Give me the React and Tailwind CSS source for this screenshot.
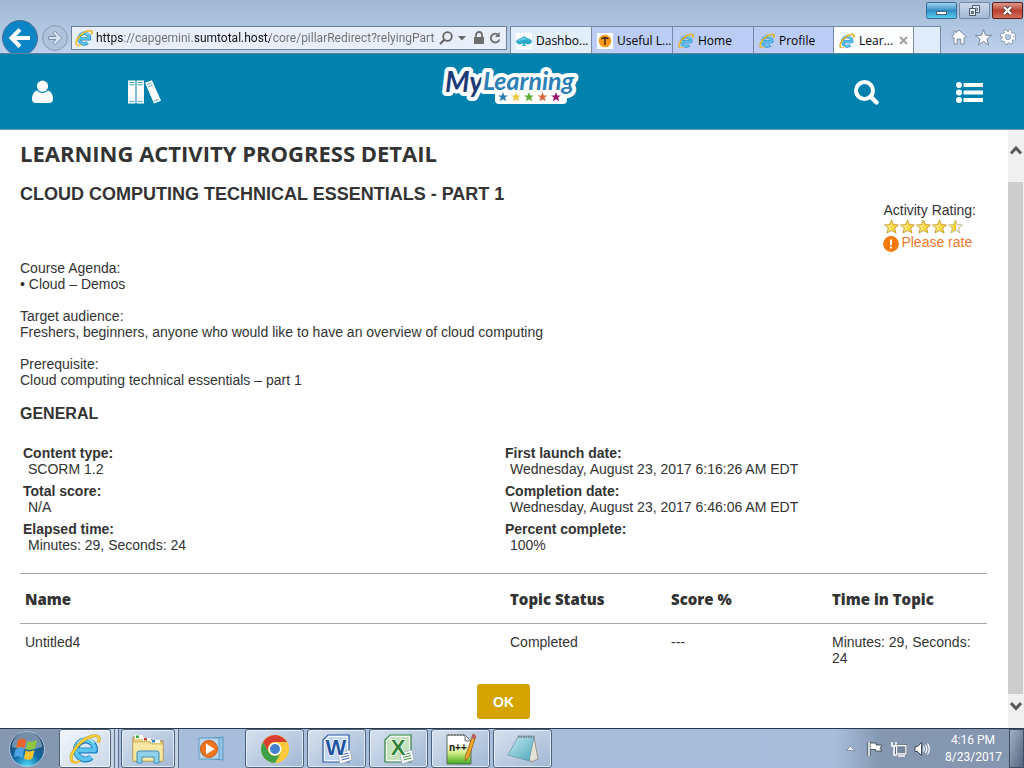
import React from "react";

const UI = "font-['Open_Sans','Noto_Sans',sans-serif]";

function IEIcon({ className }) {
  return (
    <svg viewBox="0 0 32 32" className={className} aria-hidden="true">
      <path d="M22.500 24.400A9.500 9.500 0 1 1 26 17.500H9" fill="none" stroke="#1f7fc0" strokeWidth="6" strokeLinejoin="round" />
      <path d="M22.200 24.100A9.500 9.500 0 1 1 25.700 17.300H9" fill="none" stroke="#5cc4f0" strokeWidth="4" strokeLinejoin="round" />
      <path d="M9 10C13 5 21 4 25 10" fill="none" stroke="#b8e9fb" strokeWidth="1.600" />
      <path d="M4 29C-2 24 9 8 22 3.500C30 .8 31.500 5 29 9.500" fill="none" stroke="#c8951a" strokeWidth="3" />
      <path d="M4 29C-2 24 9 8 22 3.500C30 .8 31.500 5 29 9.500" fill="none" stroke="#fbd13b" strokeWidth="2" />
      <path d="M3.500 28.500C6 31 9 29 11 27.500" fill="none" stroke="#efba28" strokeWidth="2" />
    </svg>
  );
}

function SpadeIcon() {
  return (
    <svg viewBox="0 0 16 16" className="size-4 shrink-0" aria-hidden="true">
      <rect width="16" height="16" fill="#fff" />
      <path d="M0 8.500C1 5.500 4 6.500 6 4.500C8 2.500 11 4 11.500 5.500C14 5.500 16 7 16 8.500C15.500 11.500 11 12 8.500 10.500C9 12 10 12.500 11 13H5C7 12.500 7.500 11.500 7 10.500C4 12 1 11.500 0 8.500Z" fill="#2aa9cc" />
      <path d="M1 8C3 6 5 7 7 5C9 3.500 11 5 11 6.500C8 6 5 7.500 1 8Z" fill="#6fd0e4" />
    </svg>
  );
}

function OrangeIcon() {
  return (
    <svg viewBox="0 0 16 16" className="size-4 shrink-0" aria-hidden="true">
      <rect width="16" height="16" fill="#fff" />
      <circle cx="8" cy="8" r="6.300" fill="#f79a1c" />
      <path d="M4.500 5.800Q8 3.600 11.500 5.800M8 5.500V12" fill="none" stroke="#3b2410" strokeWidth="1.400" />
    </svg>
  );
}

const tabs = [
  { label: "Dashbo...", icon: <SpadeIcon />, look: "w-[81px] bg-[#e3eefb]" },
  { label: "Useful L...", icon: <OrangeIcon />, look: "w-[81px] bg-[#bccdf5]" },
  { label: "Home", icon: <IEIcon className="size-4 shrink-0" />, look: "w-[81px] bg-[#bccdf5]" },
  { label: "Profile", icon: <IEIcon className="size-4 shrink-0" />, look: "w-[80px] bg-[#bccdf5]" },
  { label: "Lear...", icon: <IEIcon className="size-4 shrink-0" />, look: "w-[80px] bg-[#fbfdff]", active: true },
];

function WindowButtons() {
  return (
    <div className="flex h-5 items-center justify-end gap-[2px] pr-[1px]">
      <button aria-label="Minimize" className="h-[17px] w-[31px] rounded-[2px] border border-[#3b6d94] bg-linear-to-b from-[#9fd3ee] via-[#2f8fc6] to-[#58cdef]">
        <svg viewBox="0 0 29 15" className="size-full" aria-hidden="true"><rect x="9.500" y="8.500" width="10" height="3" fill="#fff" stroke="#4d6070" /></svg>
      </button>
      <button aria-label="Restore" className="h-[17px] w-[31px] rounded-[2px] border border-[#7689a5] bg-linear-to-b from-[#c9d7ea] to-[#a4b9d5]">
        <svg viewBox="0 0 29 15" className="size-full" aria-hidden="true">
          <path d="M12.500 2.500H19.500V9.500H12.500Z" fill="#e9eff7" stroke="#47566b" />
          <path d="M15 5H17.500V7.500H15Z" fill="#a9bad3" stroke="#47566b" strokeWidth=".7" />
          <path d="M9.500 5.500H15.500V12.500H9.500Z" fill="#eef3f9" stroke="#47566b" />
          <path d="M11.500 8.500H13.500V10.500H11.500Z" fill="#a9bad3" stroke="#47566b" />
        </svg>
      </button>
      <button aria-label="Close" className="h-[17px] w-[31px] rounded-[2px] border border-[#5c1e1c] bg-linear-to-b from-[#dc9a8c] via-[#bb4032] to-[#d0705a]">
        <svg viewBox="0 0 29 15" className="size-full" aria-hidden="true">
          <path d="M11 4L18 11M18 4L11 11" stroke="#5a3a3c" strokeWidth="4" />
          <path d="M11 4L18 11M18 4L11 11" stroke="#fff" strokeWidth="2.400" />
        </svg>
      </button>
    </div>
  );
}

function BrowserBar() {
  return (
    <div className={`${UI} overflow-hidden border-b border-[#62819b] bg-linear-to-b from-[#a1b9d5] to-[#bdd1ec] text-[12px] text-black`}>
      <WindowButtons />
      <div className="flex h-[33px] items-start overflow-hidden">
        <button aria-label="Back" className="ml-[2px] size-9 shrink-0">
          <svg viewBox="0 0 36 36" className="size-full" aria-hidden="true">
            <circle cx="18" cy="18" r="17.500" fill="#0b85c6" stroke="#4e6d8d" />
            <path d="M28 18H10M18 9.500L9.500 18L18 26.500" fill="none" stroke="#fff" strokeWidth="4" />
          </svg>
        </button>
        <button aria-label="Forward" className="mt-[5px] ml-[4px] size-[26px] shrink-0">
          <svg viewBox="0 0 26 26" className="size-full" aria-hidden="true">
            <circle cx="13" cy="13" r="12.400" fill="#afc3dc" stroke="#8699b1" />
            <path d="M6.500 11.500H14L10.800 8.300L13 6.200L19.800 13L13 19.800L10.800 17.700L14 14.500H6.500Z" fill="#d9e4f2" stroke="#7d8fa8" />
          </svg>
        </button>
        <div className="mt-[6px] ml-[3px] flex h-6 min-w-0 flex-1 items-center border border-[#6c7f96] bg-[#e9effa] pr-[5px] pl-[3px]">
          <IEIcon className="size-[18px] shrink-0" />
          <input
            aria-label="Address"
            defaultValue="https://capgemini.sumtotal.host/core/pillarRedirect?relyingParty"
            className="ml-[3px] min-w-0 flex-1 bg-[linear-gradient(to_right,#111_28px,#6e6e6e_28px,#6e6e6e_99px,#111_99px,#111_174px,#6e6e6e_174px)] bg-clip-text font-['Roboto',sans-serif] text-transparent outline-none"
          />
          <button aria-label="Search" className="ml-[5px] size-[14px] shrink-0">
            <svg viewBox="0 0 14 14" className="size-full" aria-hidden="true"><circle cx="8.500" cy="5.500" r="4.300" fill="none" stroke="#666" strokeWidth="1.800" /><path d="M5.500 8.500L1 13" stroke="#666" strokeWidth="2.200" /></svg>
          </button>
          <button aria-label="Show addresses" className="ml-[5px] w-2 shrink-0">
            <svg viewBox="0 0 8 5" className="w-full" aria-hidden="true"><path d="M0 0H8L4 4.500Z" fill="#666" /></svg>
          </button>
          <svg viewBox="0 0 12 14" className="ml-[7px] h-[14px] w-3 shrink-0" aria-hidden="true"><path d="M3 7V4A3 3 0 0 1 9 4V7" fill="none" stroke="#6e6e6e" strokeWidth="1.800" /><rect x="1" y="6" width="10" height="7" fill="#6e6e6e" /></svg>
          <button aria-label="Refresh" className="ml-[4px] size-3 shrink-0">
            <svg viewBox="0 0 12 12" className="size-full" aria-hidden="true"><path d="M8.500 2.300A4.400 4.400 0 1 0 10.400 7.500" fill="none" stroke="#6e6e6e" strokeWidth="1.900" /><path d="M6.300 5V4.500L10.700 0V5Z" fill="#6e6e6e" /></svg>
          </button>
        </div>
        <div className="mt-[6px] ml-[3px] flex h-[27px] shrink-0 border-t border-l border-[#7589a5]">
          {tabs.map((t) => (
            <div key={t.label} className={`flex items-center border-r border-[#7589a5] pt-[1px] pl-[5px] ${t.look}`}>
              <button className="flex items-center gap-[4px] whitespace-nowrap">
                {t.icon}
                {t.label}
              </button>
              {t.active && (
                <button aria-label="Close tab" className="ml-[6px] size-[9px]">
                  <svg viewBox="0 0 9 9" className="size-full" aria-hidden="true"><path d="M1 1L8 8M8 1L1 8" stroke="#a2a2a2" strokeWidth="2" /></svg>
                </button>
              )}
            </div>
          ))}
          <button aria-label="New tab" className="w-[27px] border-r border-[#7589a5] bg-[#e0ecf9]" />
        </div>
        <div className="mt-[9px] flex shrink-0 gap-2 pr-2 pl-[10px]">
          <button aria-label="Home" className="size-4">
            <svg viewBox="0 0 16 16" className="size-full" aria-hidden="true"><path d="M8 1L15.300 8L14 9.300L13 8.500V15H9.800V10H6.200V15H3V8.500L2 9.300L.7 8L3 5.800V2H5V4Z" fill="#fff" stroke="#74859c" strokeWidth=".9" /></svg>
          </button>
          <button aria-label="Favorites" className="size-[17px]">
            <svg viewBox="0 0 16 16" className="size-full" aria-hidden="true"><path d="M8 .5L10 6H15.700L11.200 9.400L12.800 15L8 11.700L3.200 15L4.800 9.400L.3 6H6Z" fill="#fff" stroke="#74859c" strokeWidth=".9" /></svg>
          </button>
          <button aria-label="Tools" className="size-4">
            <svg viewBox="0 0 16 16" className="size-full" aria-hidden="true">
              <circle cx="8" cy="8" r="6.300" fill="none" stroke="#74859c" strokeWidth="3.400" strokeDasharray="2.900 2.048" />
              <circle cx="8" cy="8" r="4.300" fill="none" stroke="#74859c" strokeWidth="4.200" />
              <circle cx="8" cy="8" r="6.100" fill="none" stroke="#fff" strokeWidth="2.400" strokeDasharray="2.300 2.491" strokeDashoffset="-.3" />
              <circle cx="8" cy="8" r="4.200" fill="none" stroke="#fff" strokeWidth="2.700" />
            </svg>
          </button>
        </div>
      </div>
    </div>
  );
}

const STAR = "M0-5L1.300-1.600H4.900L2.100.6L3.100 4.300L0 2.200L-3.100 4.300L-2.100.6L-4.900-1.600H-1.300Z";

function Logo() {
  const stars = [[60, "#2b7fb0"], [73, "#edc63d"], [86, "#62a932"], [99.5, "#d8693c"], [113, "#96176b"]];
  return (
    <svg viewBox="-6 0 142 44" className="mt-2 h-11 w-[142px] shrink-0 self-start" role="img" aria-label="MyLearning">
      <path d="M56 26H120V37H56Z" fill="#fff" stroke="#fff" strokeWidth="8" strokeLinejoin="round" />
      <g className="font-['Lato',sans-serif] font-bold italic" strokeLinejoin="round" stroke="#fff" strokeWidth="8" paintOrder="stroke">
        <text x="2" y="29" className="text-[28px]" fill="#1c3a78">My</text>
        <text x="40" y="27" className="text-[25px]" fill="#2b80b5">Learning</text>
      </g>
      {stars.map(([x, c]) => (
        <path key={x} d={STAR} transform={`translate(${x} 34)`} fill={c} />
      ))}
    </svg>
  );
}

function AppHeader() {
  return (
    <header className="flex h-[76px] items-center border-b border-[#6f97aa] bg-[#0081ae] pt-[1px] pr-[41px] pl-8">
      <div className="flex flex-1 items-center gap-[75px]">
        <button aria-label="Profile" className="h-6 w-[21px]">
          <svg viewBox="0 0 21 24" className="size-full" fill="#fff" aria-hidden="true">
            <circle cx="10.500" cy="6.200" r="5.600" />
            <path d="M4.800 10.500Q10.500 15.500 16.200 10.500Q21 12.500 21 19Q21 23 17 23H4Q0 23 0 19Q0 12.500 4.800 10.500Z" />
          </svg>
        </button>
        <button aria-label="Library" className="h-6 w-[33px]">
          <svg viewBox="0 0 33 24" className="size-full" aria-hidden="true">
            <g fill="#fff"><path d="M0 .5H7.500V23.500H0Z" /><path d="M8.500.5H16V23.500H8.500Z" /><path d="M17 2.800L24 .2L33 20.800L26 23.500Z" /></g>
            <path d="M1 2.500H6.500M1 4.800H6.500M1 21.300H6.500M9.500 2.500H15M9.500 4.800H15M9.500 21.300H15M19 4.600L23.500 3M20 6.900L24.500 5.200M26 21.200L30.500 19.500" stroke="#0081ae" strokeWidth=".7" />
          </svg>
        </button>
      </div>
      <Logo />
      <div className="flex flex-1 items-center justify-end gap-[77px]">
        <button aria-label="Search" className="size-[25px]">
          <svg viewBox="0 0 25 25" className="size-full" aria-hidden="true">
            <circle cx="10.500" cy="10.500" r="8.500" fill="none" stroke="#fff" strokeWidth="4" />
            <path d="M16.500 16.500L22.500 22.500" stroke="#fff" strokeWidth="4.400" strokeLinecap="round" />
          </svg>
        </button>
        <button aria-label="Menu" className="h-[21px] w-[27px]">
          <svg viewBox="0 0 27 21" className="size-full" fill="#fff" aria-hidden="true">
            <circle cx="3" cy="3" r="3" /><circle cx="3" cy="10.500" r="3" /><circle cx="3" cy="18" r="3" />
            <rect x="7.500" y="1" width="19.500" height="4" /><rect x="7.500" y="8.500" width="19.500" height="4" /><rect x="7.500" y="16" width="19.500" height="4" />
          </svg>
        </button>
      </div>
    </header>
  );
}

function Rating() {
  return (
    <div className="pt-5 pr-[11px]">
      <div>Activity Rating:</div>
      <div className="flex h-4" role="img" aria-label="4.5 out of 5">
        {[1, 2, 3, 4, 5].map((n) => (
          <svg key={n} viewBox="0 0 16 16" className="size-4" aria-hidden="true">
            <defs>
              <linearGradient id={`s${n}`}>
                <stop offset="0" stopColor="#fff19a" />
                <stop offset={n === 5 ? ".5" : "1"} stopColor="#f5cb1c" />
                {n === 5 && <stop offset=".5" stopColor="#eef0f5" />}
              </linearGradient>
            </defs>
            <path d="M8.500 2L10.400 6.600L15.500 7L11.700 10.200L13 15L8.500 12.400L4 15L5.300 10.200L1.500 7L6.600 6.600Z" fill={`url(#s${n})`} stroke={n === 5 ? "#c2b57e" : "#c09a2e"} strokeWidth=".9" />
          </svg>
        ))}
      </div>
      <a href="#rate" className="flex items-start gap-[2px] text-[#f0782a]">
        <svg viewBox="0 0 16 16" className="mt-[2px] -mb-[2px] size-4" aria-hidden="true"><circle cx="8" cy="8" r="7.900" fill="#f47b0b" /><rect x="7" y="3.500" width="2" height="5.500" fill="#fff" /><rect x="7" y="10.500" width="2" height="2" fill="#fff" /></svg>
        Please rate
      </a>
    </div>
  );
}

const facts = [
  ["Content type:", "SCORM 1.2"],
  ["First launch date:", "Wednesday, August 23, 2017 6:16:26 AM EDT"],
  ["Total score:", "N/A"],
  ["Completion date:", "Wednesday, August 23, 2017 6:46:06 AM EDT"],
  ["Elapsed time:", "Minutes: 29, Seconds: 24"],
  ["Percent complete:", "100%"],
];

function Content() {
  const head = "border-y border-[#a8a8a8] px-[5px] text-left font-['Open_Sans',sans-serif] text-[15px] font-extrabold";
  const cell = "px-[5px] pt-[10px] align-top";
  return (
    <main className="min-w-0 flex-1 pt-[7px] pr-[21px] pb-[9px] pl-5">
      <h1 className="font-['Open_Sans',sans-serif] text-[22px] leading-8 font-bold">LEARNING ACTIVITY PROGRESS DETAIL</h1>
      <div className="mt-[13px] flex items-start justify-between">
        <h2 className="text-[18px] leading-6 font-bold">CLOUD COMPUTING TECHNICAL ESSENTIALS - PART 1</h2>
        <Rating />
      </div>
      <div className="mt-[10px] flex flex-col gap-4">
        <p>Course Agenda:<br />• Cloud – Demos</p>
        <p>Target audience:<br />Freshers, beginners, anyone who would like to have an overview of cloud computing</p>
        <p>Prerequisite:<br />Cloud computing technical essentials – part 1</p>
      </div>
      <h3 className="mt-[14px] text-[16px] leading-6 font-bold">GENERAL</h3>
      <dl className="mt-[19px] grid grid-cols-2 gap-y-[6px] pl-[3px]">
        {facts.map(([k, v]) => (
          <div key={k}>
            <dt className="font-bold">{k}</dt>
            <dd className="pl-[5px]">{v}</dd>
          </div>
        ))}
      </dl>
      <table className="mt-5 w-full table-fixed border-collapse">
        <thead>
          <tr className="h-[50px]">
            <th className={head}>Name</th>
            <th className={`${head} w-[161px]`}>Topic Status</th>
            <th className={`${head} w-[161px]`}>Score %</th>
            <th className={`${head} w-[160px]`}>Time in Topic</th>
          </tr>
        </thead>
        <tbody>
          <tr>
            <td className={cell}>Untitled4</td>
            <td className={cell}>Completed</td>
            <td className={cell}>---</td>
            <td className={cell}>Minutes: 29, Seconds: 24</td>
          </tr>
        </tbody>
      </table>
      <div className="mt-[18px] flex justify-center">
        <button className="h-[35px] w-[53px] rounded-[3px] bg-[#d4a300] font-bold text-white">OK</button>
      </div>
    </main>
  );
}

function ScrollBar() {
  return (
    <div className="flex w-4 shrink-0 flex-col bg-[#f0f0f0]">
      <button aria-label="Scroll up" className="flex h-[52px] flex-col items-center pt-[15px]">
        <svg viewBox="0 0 12 10" className="h-[10px] w-3" aria-hidden="true"><path d="M1 8.500L6 3L11 8.500" fill="none" stroke="#5a5a5a" strokeWidth="3" /></svg>
      </button>
      <div className="mr-[1px] flex-1 bg-[#cdcdcd]" />
      <button aria-label="Scroll down" className="flex h-[34px] flex-col items-center pt-[7px]">
        <svg viewBox="0 0 12 10" className="h-[10px] w-3" aria-hidden="true"><path d="M1 2L6 7.500L11 2" fill="none" stroke="#5a5a5a" strokeWidth="3" /></svg>
      </button>
    </div>
  );
}

function FolderIcon() {
  return (
    <svg viewBox="0 0 34 32" className="h-8 w-[34px]" aria-hidden="true">
      <path d="M2 4H11L13 6H20L22 8H32V28H2Z" fill="#e9cf7c" stroke="#a88a3c" />
      <path d="M4 2H12V6H4Z" fill="#fff" /><path d="M5 2.500H8V5H5Z" fill="#2fa83c" />
      <path d="M12 5H20V8H12Z" fill="#fff" /><path d="M13 5H16V7.500H13Z" fill="#d0442c" />
      <path d="M20 7H29V10H20Z" fill="#fff" /><path d="M21 7H24V9.500H21Z" fill="#2f83c8" />
      <path d="M2 9H18L20 11H32V28H2Z" fill="#f8e8a4" stroke="#c7a955" strokeWidth=".7" />
      <path d="M6 30V20Q6 18 8 18H26Q28 18 28 20V30H23V24H11V30Z" fill="#8fd0ea" stroke="#3c8fb5" />
    </svg>
  );
}

function PlayerIcon() {
  return (
    <svg viewBox="0 0 30 28" className="h-7 w-[30px]" aria-hidden="true">
      <path d="M5 4L26 2V25L5 23Z" fill="#8fc4e6" stroke="#5c95bd" />
      <path d="M2 3H22V24H2Z" fill="#b5d8ef" stroke="#649cc2" />
      <circle cx="12" cy="14" r="8.500" fill="#ee7521" stroke="#c9550e" /><path d="M9 8.500L17.500 14L9 19.500Z" fill="#fff" />
    </svg>
  );
}

function ChromeIcon() {
  return (
    <svg viewBox="-16 -16 32 32" className="size-8" aria-hidden="true">
      <circle r="14" fill="#fbc93c" />
      <path d="M-12.100-7A14 14 0 0 1 12.100-7H0A7 7 0 0 0-6.100 3.500Z" fill="#d93e30" />
      <path d="M-12.100-7A14 14 0 0 0 0 14L6.100 3.500A7 7 0 0 1-6.100 3.500Z" fill="#3da14b" />
      <circle r="6.500" fill="#fff" /><circle r="5" fill="#4381cf" />
    </svg>
  );
}

function OfficeIcon({ letter, dark, light }) {
  return (
    <svg viewBox="0 0 32 32" className="size-8" aria-hidden="true">
      <path d="M7 2H28V29H2V7Z" fill="#f4f8fd" stroke={dark} strokeWidth="1.200" />
      <path d="M8 4H26V27H4V8Z" fill={light} />
      <path d="M17 20L29 17L31 27L19 31Z" fill="#fff" stroke="#9aa9bd" strokeWidth=".8" />
      <path d="M19.500 22L27.500 20M20 24.500L28 22.500M20.500 27L28.500 25" stroke={dark} strokeWidth=".9" />
      <text x="15" y="22" textAnchor="middle" className="font-['Liberation_Sans',sans-serif] text-[22px] font-bold" fill={dark} stroke="#fff" strokeWidth="1.500" paintOrder="stroke">{letter}</text>
    </svg>
  );
}

function NppIcon() {
  return (
    <svg viewBox="0 0 32 34" className="h-[34px] w-8" aria-hidden="true">
      <defs><linearGradient id="npp" x2="0" y2="1"><stop offset=".3" stopColor="#fff" /><stop offset=".6" stopColor="#d5ee8e" /><stop offset="1" stopColor="#3fab1a" /></linearGradient></defs>
      <path d="M2 3H20L26 9V32H2Z" fill="url(#npp)" stroke="#5d6a60" />
      <path d="M3 3H19" stroke="#777" strokeWidth="2" strokeDasharray="1.500 1.500" />
      <path d="M20 3V9H26Z" fill="#dfe5e5" stroke="#777" />
      <text x="4" y="19" className="font-['Liberation_Sans',sans-serif] text-[10px] font-bold" fill="#111">n++</text>
      <path d="M28 2L31 4L24 25L20 29L20.500 24Z" fill="#efa52a" stroke="#9a6416" strokeWidth=".8" />
      <path d="M28 2L31 4L29.800 7.500L26.600 6Z" fill="#b9586a" />
    </svg>
  );
}

function NotepadIcon() {
  return (
    <svg viewBox="0 0 32 32" className="size-8" aria-hidden="true">
      <defs><linearGradient id="note" x2="1" y2="1"><stop offset="0" stopColor="#c7eaf0" /><stop offset="1" stopColor="#4aa6bd" /></linearGradient></defs>
      <path d="M27 4L31 26L24 29L19 20Z" fill="#e5e2d8" stroke="#8d8774" strokeWidth=".8" />
      <path d="M11 4H27L22 28L1 22Z" fill="url(#note)" stroke="#6895a1" strokeWidth=".7" />
      <path d="M11 3.500H28" stroke="#707d80" strokeWidth="2" strokeDasharray="1.500 1" />
    </svg>
  );
}

const RAISED = "rounded-[3px] border border-[#4d6079] bg-linear-to-br from-[#d6e1ef] to-[#a2b8d5] shadow-[inset_0_0_0_1px_#e4edf7]";

const tasks = [
  { name: "Google Chrome", icon: <ChromeIcon /> },
  { name: "Word", icon: <OfficeIcon letter="W" dark="#2455a5" light="#c3d8f4" /> },
  { name: "Excel", icon: <OfficeIcon letter="X" dark="#2f8437" light="#c4e3ba" /> },
  { name: "Notepad++", icon: <NppIcon /> },
  { name: "Notepad", icon: <NotepadIcon /> },
];

function Taskbar() {
  return (
    <footer className={`${UI} flex h-10 items-stretch border-t border-[#27384d] bg-[#a6bedb] text-[12px] text-white`}>
      <button aria-label="Start" className="flex w-[59px] shrink-0 items-center bg-[#8496b0] pl-2">
        <svg viewBox="0 0 38 38" className="size-[38px]" aria-hidden="true">
          <defs><radialGradient id="orb" cx=".5" cy="1" r=".9"><stop offset="0" stopColor="#4fe0f7" /><stop offset=".45" stopColor="#136ba4" /><stop offset="1" stopColor="#2a4668" /></radialGradient></defs>
          <circle cx="19" cy="19" r="17.500" fill="url(#orb)" stroke="#a9c9e2" />
          <path d="M4 17A15 15 0 0 1 34 17Q19 22 4 17Z" fill="#c2d4e6" opacity=".5" />
          <path d="M10 10Q14 7 18 10L16.500 18Q12 15.500 8 18Z" fill="#ee652b" />
          <path d="M19.500 11Q24 13 29 10L27 18.500Q22 21 18 19Z" fill="#8dc63f" />
          <path d="M7.500 19.500Q12 17 16 19.500L14.500 28Q10 25 6 27.500Z" fill="#4ba5e6" />
          <path d="M17.500 20.500Q22 22.500 26.500 20L24.500 28.500Q20 31 16 28.500Z" fill="#fcc52f" />
        </svg>
      </button>
      <button aria-label="Internet Explorer" className="flex w-[52px] shrink-0 items-center justify-center rounded-[3px] border border-[#4d6079] bg-linear-to-br from-[#f3f7fc] to-[#c8d7e9] shadow-[inset_0_0_0_1px_#f3f7fc]">
        <IEIcon className="size-8" />
      </button>
      <div className="w-1 border-r border-[#5c6f89] bg-[#c4d3e6]" />
      <div className="w-1 border-r border-[#5c6f89] bg-[#c4d3e6]" />
      <button aria-label="Windows Explorer" className={`${RAISED} ml-[2px] flex w-[54px] shrink-0 items-center justify-center`}>
        <FolderIcon />
      </button>
      <div className="w-1 border-r border-[#5c6f89] bg-[#c4d3e6]" />
      <button aria-label="Media Player" className="flex w-[66px] shrink-0 items-center justify-center">
        <PlayerIcon />
      </button>
      <div className="flex gap-[3px]">
        {tasks.map((t) => (
          <button key={t.name} aria-label={t.name} className={`${RAISED} flex w-[59px] items-center justify-center`}>
            {t.icon}
          </button>
        ))}
      </div>
      <div className="flex flex-1 items-center justify-end bg-linear-to-r from-[#a6bedb] from-60% to-[#8496b0] to-70%">
        <button aria-label="Show hidden icons" className="w-[9px]">
          <svg viewBox="0 0 9 5" className="w-full" aria-hidden="true"><path d="M.5 4.500L4.500.5L8.500 4.500Z" fill="#fff" stroke="#5c6b80" strokeWidth=".6" /></svg>
        </button>
        <svg viewBox="0 0 16 16" className="ml-[12px] size-4" aria-hidden="true"><path d="M2 1V15" stroke="#303a48" strokeWidth="3" /><path d="M3 2H9V4H15L13 7.500L15 10H8.500V8.500H3Z" fill="#fff" stroke="#303a48" strokeWidth=".8" /><path d="M2 1V15" stroke="#fff" strokeWidth="1.600" /></svg>
        <svg viewBox="0 0 16 16" className="ml-[8px] size-4" aria-hidden="true"><path d="M5.500 4.500H15V13H5.500Z" fill="#75879f" stroke="#303a48" strokeWidth="2.500" /><path d="M5.500 4.500H15V13H5.500ZM7 15H14" fill="#75879f" stroke="#fff" strokeWidth="1.300" /><path d="M1 1V5H5V1M3 5V14H6" fill="none" stroke="#fff" strokeWidth="1.500" /></svg>
        <svg viewBox="0 0 16 16" className="ml-[7px] size-4" aria-hidden="true"><path d="M1 5.500H3.500L7.500 1.500V14.500L3.500 10.500H1Z" fill="#fff" stroke="#303a48" strokeWidth=".9" /><path d="M9.500 5.500Q11 8 9.500 10.500M11.500 4Q14 8 11.500 12M13.500 2.500Q17 8 13.500 13.500" fill="none" stroke="#fff" strokeWidth="1.200" /></svg>
        <div className="ml-[15px] w-[56px] text-center font-['Roboto',sans-serif] leading-[17px] whitespace-nowrap">
          <div>4:16 PM</div>
          <div>8/23/2017</div>
        </div>
        <button aria-label="Show desktop" className="ml-[8px] w-[15px] self-stretch border border-[#405067] bg-linear-to-br from-[#a3b1c5] to-[#52657f]" />
      </div>
    </footer>
  );
}

export default function App() {
  return (
    <div className="flex min-h-screen flex-col bg-white font-['Liberation_Sans',Arial,sans-serif] text-[14px] leading-4 text-[#333]">
      <BrowserBar />
      <AppHeader />
      <div className="flex flex-1">
        <Content />
        <ScrollBar />
      </div>
      <Taskbar />
    </div>
  );
}
